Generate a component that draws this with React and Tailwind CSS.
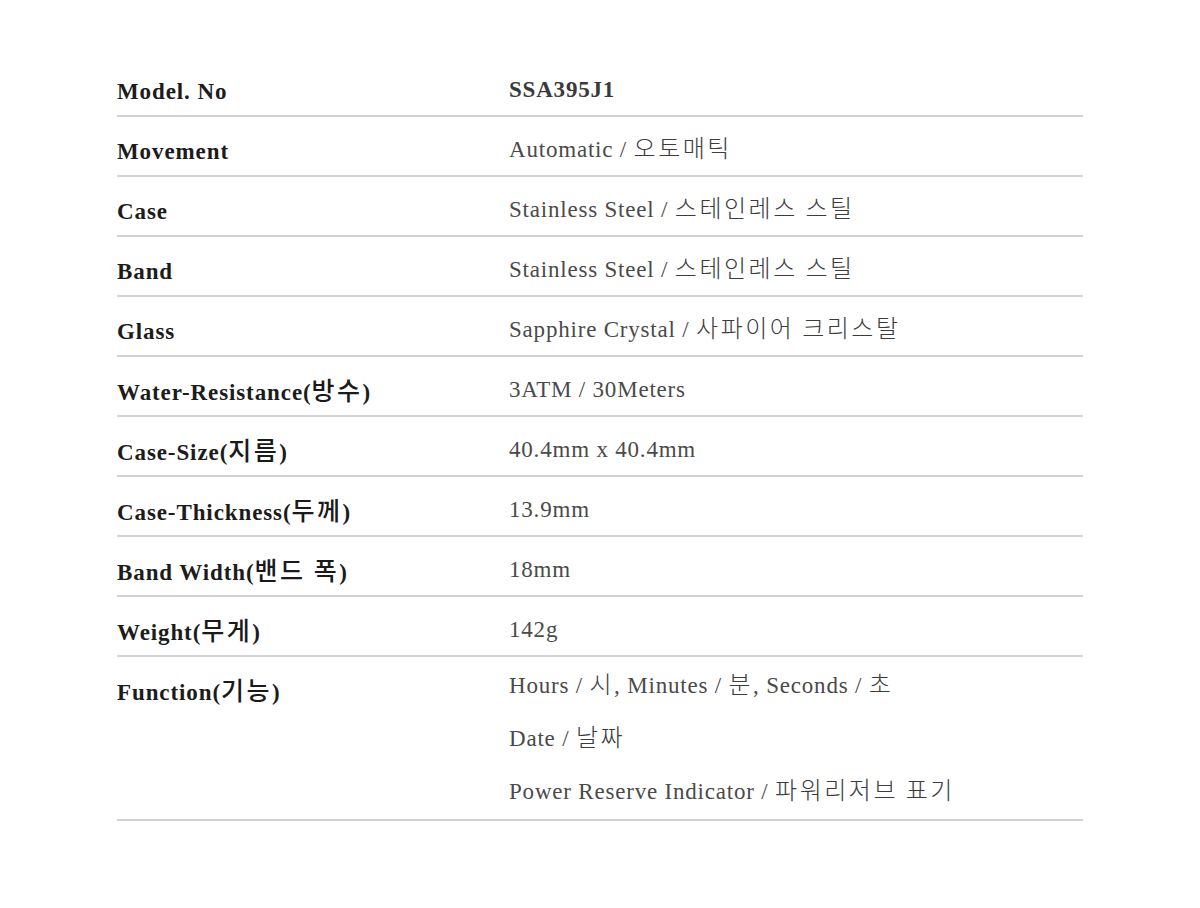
const specs = [
  { label: 'Model. No', value: ['SSA395J1'], strong: true },
  { label: 'Movement', value: ['Automatic / 오토매틱'] },
  { label: 'Case', value: ['Stainless Steel / 스테인레스 스틸'] },
  { label: 'Band', value: ['Stainless Steel / 스테인레스 스틸'] },
  { label: 'Glass', value: ['Sapphire Crystal / 사파이어 크리스탈'] },
  { label: 'Water-Resistance(방수)', value: ['3ATM / 30Meters'] },
  { label: 'Case-Size(지름)', value: ['40.4mm x 40.4mm'] },
  { label: 'Case-Thickness(두께)', value: ['13.9mm'] },
  { label: 'Band Width(밴드 폭)', value: ['18mm'] },
  { label: 'Weight(무게)', value: ['142g'] },
  {
    label: 'Function(기능)',
    value: [
      'Hours / 시, Minutes / 분, Seconds / 초',
      'Date / 날짜',
      'Power Reserve Indicator / 파워리저브 표기',
    ],
  },
]

// korean runs get their own (wider, gulim-ish) look
function Mixed({ text, hangulClass }) {
  const parts = text.split(/([\uAC00-\uD7A3]+(?: [\uAC00-\uD7A3]+)*)/)
  return parts.map((p, i) =>
    /[\uAC00-\uD7A3]/.test(p) ? (
      <span key={i} className={hangulClass}>{p}</span>
    ) : (
      <span key={i}>{p}</span>
    )
  )
}

function SpecRow({ label, value, strong }) {
  const multi = value.length > 1
  return (
    <div className={`flex border-b-2 border-[#d2d2d2] ${multi ? 'h-[164px]' : 'h-[60px]'}`}>
      <div className="w-[392px] shrink-0 pt-[20px] leading-[30px] text-[23px] font-bold text-[#1c1c1c] tracking-[0.9px]">
        <Mixed text={label} hangulClass="font-['Noto_Sans_CJK_KR',sans-serif] font-medium text-[25px] leading-none tracking-[2.5px] text-[#1a1a1a]" />
      </div>
      <div className={multi ? 'pt-[2px] leading-[53px]' : 'pt-[18px] leading-[30px]'}>
        {value.map((line) => (
          <div
            key={line}
            className={`text-[23px] tracking-[0.8px] ${strong ? 'font-bold text-[#3a3a3a]' : 'text-[#4a4a4a]'}`}
          >
            <Mixed text={line} hangulClass="font-['Noto_Sans_CJK_KR',sans-serif] font-light text-[24px] leading-none tracking-[2.5px] text-[#3c3c3c]" />
          </div>
        ))}
      </div>
    </div>
  )
}

export default function App() {
  return (
    <div className="min-h-screen bg-white pt-[57px] font-['Liberation_Serif','Noto_Sans_CJK_KR',serif]">
      <div className="ml-[117px] w-[966px]">
        {specs.map((s) => (
          <SpecRow key={s.label} {...s} />
        ))}
      </div>
    </div>
  )
}
